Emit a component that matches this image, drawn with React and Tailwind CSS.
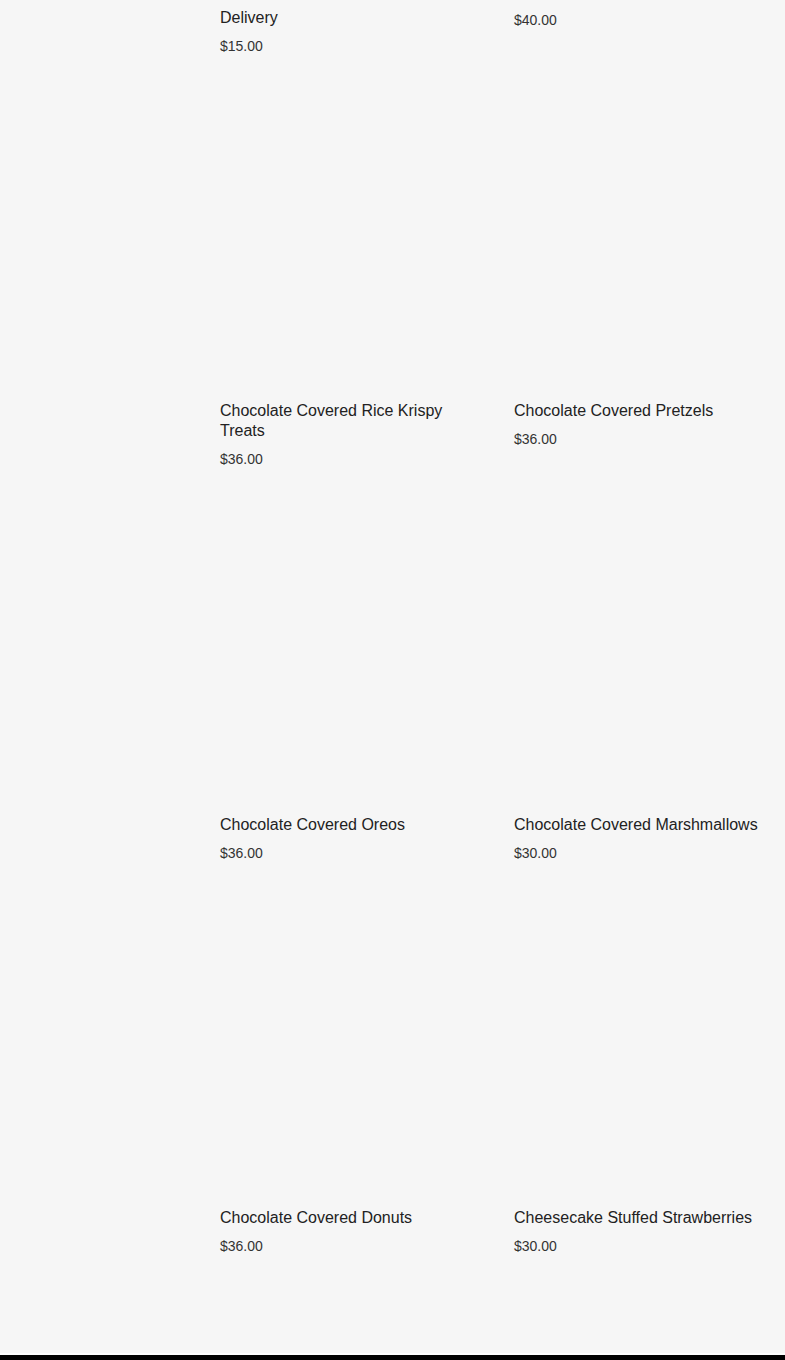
import React from 'react';

const products = [
  { name: 'Chocolate Covered Rice Krispy Treats', price: '$36.00' },
  { name: 'Chocolate Covered Pretzels', price: '$36.00' },
  { name: 'Chocolate Covered Oreos', price: '$36.00' },
  { name: 'Chocolate Covered Marshmallows', price: '$30.00' },
  { name: 'Chocolate Covered Donuts', price: '$36.00' },
  { name: 'Cheesecake Stuffed Strawberries', price: '$30.00' },
];

function ProductCard({ product }) {
  return (
    <a href="#" className="flex flex-col">
      {/* image slot, still loading */}
      <div className="h-[301px] w-full" />
      <h3 className="mt-[14px] text-[16px] leading-[20px] font-normal text-[#222222]">
        {product.name}
      </h3>
      <p className="mt-[8px] text-[14px] leading-[20px] text-[#333333]">{product.price}</p>
    </a>
  );
}

export default function App() {
  return (
    <div className="min-h-screen bg-[#f6f6f6] font-['Liberation_Sans',Arial,sans-serif] flex flex-col">
      <main className="flex">
        {/* filters column */}
        <aside className="w-[220px] shrink-0" />

        <section className="w-[558px]">
          {/* tail of the row above the fold */}
          <div className="grid grid-cols-2 gap-x-[30px] items-start">
            <a href="#" className="flex flex-col pt-[8px]">
              <h3 className="text-[16px] leading-[20px] font-normal text-[#222222]">Delivery</h3>
              <p className="mt-[8px] text-[14px] leading-[20px] text-[#333333]">$15.00</p>
            </a>
            <a href="#" className="flex flex-col pt-[10px]">
              <p className="text-[14px] leading-[20px] text-[#333333]">$40.00</p>
            </a>
          </div>

          <div className="grid grid-cols-2 gap-x-[30px] gap-y-[30.6px] pt-[30px] items-start">
            {products.map((p) => (
              <ProductCard key={p.name} product={p} />
            ))}
          </div>
        </section>
      </main>

      <footer className="mt-[97px] border-t-2 border-[#fdfdfd] bg-black h-[320px]" />
    </div>
  );
}
